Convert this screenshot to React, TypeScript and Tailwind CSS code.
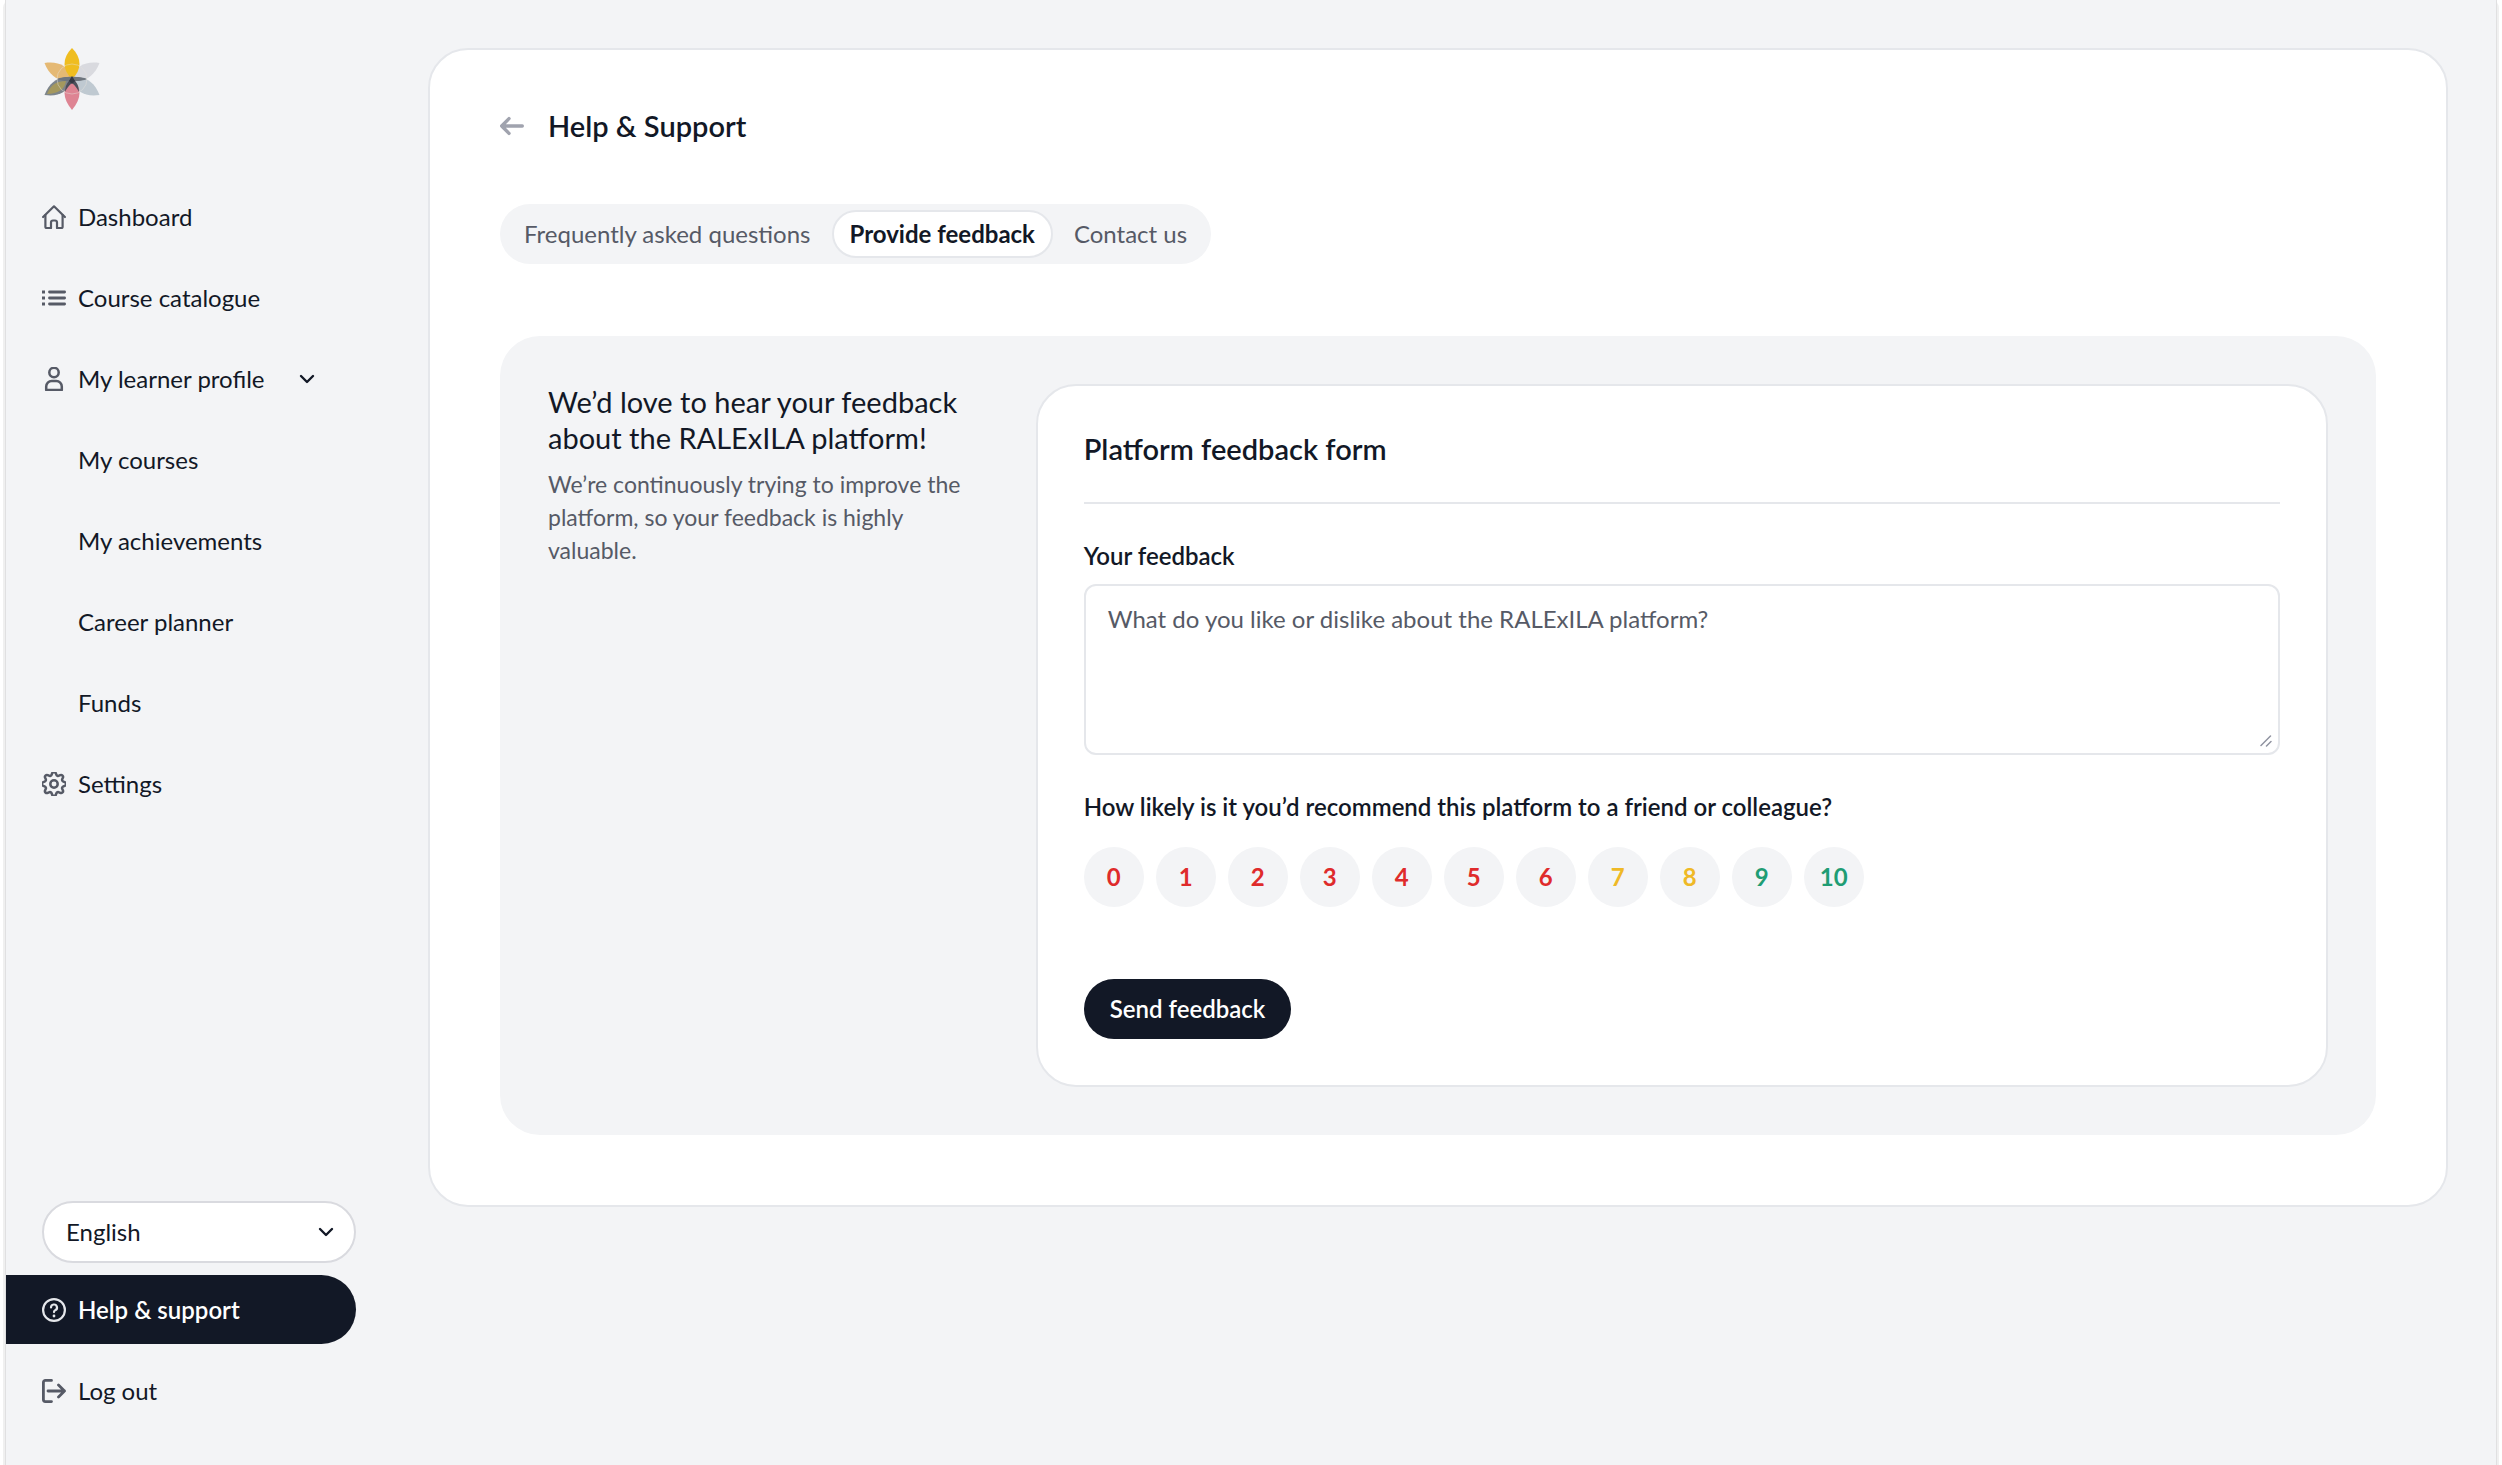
import React from 'react';

type IconProps = { className?: string };

const Logo: React.FC = () => (
  <svg width="56" height="62" viewBox="0 0 56 62" fill="none" aria-hidden="true">
    <path d="M0.500 15C13 13 25 17 28 31C16 35 6 29 0.500 15Z" fill="#E5B974" />
    <path d="M55.500 15C43 13 31 17 28 31C40 35 50 29 55.500 15Z" fill="#D9DADF" />
    <path d="M0.500 47C6 33 16 27 28 31C25 45 13 49 0.500 47Z" fill="#7D858B" />
    <path d="M55.500 47C50 33 40 27 28 31C31 45 43 49 55.500 47Z" fill="#BFC9D1" />
    <path d="M3 46C7 36 13 33 22 33C21 41 14 46 3 46Z" fill="#C5A73A" fillOpacity=".55" />
    <path d="M28 0C38 10 38 22 28 31C18 22 18 10 28 0Z" fill="#EFBD20" />
    <path d="M28 30C38 39 38 50 28 62C18 50 18 39 28 30Z" fill="#DE8493" />
    <path d="M13 31C18 28 38 28 43 31C38 34 18 34 13 31Z" fill="#6F757D" />
    <path d="M28 29C31 33 35 36 35 44C34 42 31 37 28 35C25 37 22 42 21 44C21 36 25 33 28 29Z" fill="#4B505B" />
    <path d="M28 28L31 33L28 36L25 33Z" fill="#343844" />
    <circle cx="28" cy="31" r="15" stroke="#E6E3DC" strokeOpacity=".45" />
  </svg>
);

const HomeIcon: React.FC<IconProps> = ({ className }) => (
  <svg className={className} viewBox="0 0 24 24" fill="none" stroke="currentColor" strokeWidth="2.200" strokeLinecap="round" strokeLinejoin="round">
    <path d="M1.100 12L12 1.300L22.900 12" />
    <path d="M3.400 10V22a1 1 0 0 0 1 1H9v-5.500a2 2 0 0 1 2-2h2a2 2 0 0 1 2 2V23h4.600a1 1 0 0 0 1-1V10" />
  </svg>
);

const ListIcon: React.FC<IconProps> = ({ className }) => (
  <svg className={className} viewBox="0 0 24 24" fill="none" stroke="currentColor" strokeWidth="2.800" strokeLinecap="round">
    <path d="M7.500 6H22.600M7.500 12H22.600M7.500 18H22.600" />
    <path d="M0 6H3M0 12H3M0 18H3" strokeLinecap="butt" />
  </svg>
);

const UserIcon: React.FC<IconProps> = ({ className }) => (
  <svg className={className} viewBox="0 0 24 24" fill="none" stroke="currentColor" strokeWidth="2.500" strokeLinejoin="round">
    <circle cx="12" cy="5.500" r="4.700" />
    <path d="M4.200 22.900V19.500a5.500 5.500 0 0 1 5.500-5.500h4.600a5.500 5.500 0 0 1 5.500 5.500V22.900Z" />
  </svg>
);

const GearIcon: React.FC<IconProps> = ({ className }) => (
  <svg className={className} viewBox="0 0 24 24" fill="none" stroke="currentColor" strokeWidth="2.500" strokeLinejoin="round">
    <circle cx="12" cy="12" r="3.700" />
    <path
      transform="rotate(22.5 12 12)"
      d="M10.546 2.438a1.957 1.957 0 0 0 2.908 0L14.400 1.400a1.959 1.959 0 0 1 3.410 1.413l-.071 1.400A1.958 1.958 0 0 0 19.790 6.270l1.400-.071A1.959 1.959 0 0 1 22.600 9.608l-1.041.94a1.960 1.960 0 0 0 0 2.909l1.041.94A1.959 1.959 0 0 1 21.192 17.800l-1.400-.071a1.958 1.958 0 0 0-2.057 2.056l.071 1.400A1.959 1.959 0 0 1 14.400 22.600l-.941-1.041a1.957 1.957 0 0 0-2.908 0L9.606 22.600A1.959 1.959 0 0 1 6.200 21.192l.072-1.400a1.958 1.958 0 0 0-2.057-2.056l-1.400.071A1.958 1.958 0 0 1 1.400 14.400l1.041-.94a1.960 1.960 0 0 0 0-2.909L1.400 9.608A1.958 1.958 0 0 1 2.808 6.200l1.400.071A1.958 1.958 0 0 0 6.264 4.213l-.072-1.400A1.959 1.959 0 0 1 9.606 1.400Z"
    />
  </svg>
);

const HelpIcon: React.FC<IconProps> = ({ className }) => (
  <svg className={className} viewBox="0 0 24 24" fill="none" stroke="currentColor" strokeWidth="2.200" strokeLinecap="round" strokeLinejoin="round">
    <circle cx="12" cy="12" r="10.900" />
    <path d="M9 9.500a3 3 0 1 1 4.200 2.750A2 2 0 0 0 12 14.100" />
    <circle cx="12" cy="18" r="1.400" fill="currentColor" stroke="none" />
  </svg>
);

const LogoutIcon: React.FC<IconProps> = ({ className }) => (
  <svg className={className} viewBox="0 0 24 24" fill="none" stroke="currentColor" strokeWidth="2.800" strokeLinecap="round" strokeLinejoin="round">
    <path d="M9.500 1.400H3.400a2 2 0 0 0-2 2V20.600a2 2 0 0 0 2 2H9.500" />
    <path d="M6 12H22.500M16.500 6L22.500 12L16.500 18" />
  </svg>
);

const ArrowLeftIcon: React.FC<IconProps> = ({ className }) => (
  <svg className={className} viewBox="0 0 24 24" fill="none" stroke="currentColor" strokeWidth="3.400" strokeLinecap="round" strokeLinejoin="round">
    <path d="M22.300 12H1.700M9 4.600L1.700 12L9 19.400" />
  </svg>
);

const ChevronIcon: React.FC<IconProps> = ({ className }) => (
  <svg className={className} viewBox="0 0 16 16" fill="none" stroke="currentColor" strokeWidth="2.400" strokeLinecap="round" strokeLinejoin="round">
    <path d="M2 5L8 11L14 5" />
  </svg>
);

const ResizeHandle: React.FC<IconProps> = ({ className }) => (
  <svg className={className} viewBox="0 0 12 12" fill="none" stroke="currentColor" strokeWidth="1.500" strokeLinecap="round">
    <path d="M1 10.500L10.500 1M6.500 11L11 6.500" />
  </svg>
);

const NavItem: React.FC<{ label: string; icon?: React.FC<IconProps>; active?: boolean; children?: React.ReactNode }> = ({ label, icon: Icon, active, children }) => (
  <a
    href="#"
    className={
      active
        ? 'flex h-[69px] items-center gap-3 rounded-r-full bg-[#121826] pl-9 font-semibold text-white'
        : 'flex h-[69px] items-center gap-3 pl-9 text-[#121826]'
    }
  >
    <span className={active ? 'h-6 w-6 text-gray-200' : 'h-6 w-6 text-[#565a66]'}>{Icon && <Icon className="h-6 w-6" />}</span>
    {label}
    {children}
  </a>
);

const scores = [
  { value: 0, color: 'text-[#df2b2b]' },
  { value: 1, color: 'text-[#df2b2b]' },
  { value: 2, color: 'text-[#df2b2b]' },
  { value: 3, color: 'text-[#df2b2b]' },
  { value: 4, color: 'text-[#df2b2b]' },
  { value: 5, color: 'text-[#df2b2b]' },
  { value: 6, color: 'text-[#df2b2b]' },
  { value: 7, color: 'text-[#efb926]' },
  { value: 8, color: 'text-[#efb926]' },
  { value: 9, color: 'text-[#1f9d74]' },
  { value: 10, color: 'text-[#1f9d74]' },
];

const Sidebar: React.FC = () => (
  <aside className="flex w-[350px] shrink-0 flex-col pt-12 pb-10">
    <a href="#" aria-label="Home" className="ml-[38px] block h-[62px]">
      <Logo />
    </a>
    <nav className="mt-18 flex flex-col gap-3">
      <NavItem label="Dashboard" icon={HomeIcon} />
      <NavItem label="Course catalogue" icon={ListIcon} />
      <NavItem label="My learner profile" icon={UserIcon}>
        <ChevronIcon className="ml-[22px] h-4 w-4" />
      </NavItem>
      <NavItem label="My courses" />
      <NavItem label="My achievements" />
      <NavItem label="Career planner" />
      <NavItem label="Funds" />
      <NavItem label="Settings" icon={GearIcon} />
    </nav>
    <div className="mt-auto flex flex-col gap-3">
      <div className="relative ml-9">
        <select aria-label="Language" className="h-[62px] w-full appearance-none rounded-full border-2 border-[#d9dadf] bg-white px-[22px] text-[#121826]">
          <option>English</option>
        </select>
        <ChevronIcon className="pointer-events-none absolute top-[23px] right-[22px] h-4 w-4 text-[#121826]" />
      </div>
      <NavItem label="Help & support" icon={HelpIcon} active />
      <NavItem label="Log out" icon={LogoutIcon} />
    </div>
  </aside>
);

const FeedbackForm: React.FC = () => (
  <form className="flex-1 rounded-[40px] border-2 border-gray-200 bg-white p-[46px]">
    <h2 className="border-b-2 border-gray-200 pb-9 text-[29px] leading-[34px] font-semibold">Platform feedback form</h2>
    <label htmlFor="feedback" className="mt-9 block leading-8 font-semibold">
      Your feedback
    </label>
    <div className="relative mt-3">
      <textarea
        id="feedback"
        placeholder="What do you like or dislike about the RALExILA platform?"
        className="block h-[171px] w-full resize-none rounded-xl border-2 border-gray-200 bg-white px-[22px] py-[15px] leading-9 placeholder:text-[#565a66]"
      />
      <ResizeHandle className="pointer-events-none absolute right-2 bottom-2 h-3 w-3 text-[#9093a0]" />
    </div>
    <fieldset className="mt-9">
      <legend className="leading-8 font-semibold">How likely is it you’d recommend this platform to a friend or colleague?</legend>
      <div className="mt-6 flex gap-3">
        {scores.map((score) => (
          <button key={score.value} type="button" className={`h-15 w-15 rounded-full bg-gray-100 font-bold ${score.color}`}>
            {score.value}
          </button>
        ))}
      </div>
    </fieldset>
    <button type="submit" className="mt-18 block h-15 rounded-full bg-[#121826] px-[26px] font-semibold text-white">
      Send feedback
    </button>
  </form>
);

const App: React.FC = () => {
  return (
    <div className="bg-white px-[3px] font-['Lato','Liberation_Sans',sans-serif] text-2xl text-[#121826]">
      <div className="rounded-t-lg bg-[#f0f0f0] px-[2px]">
        <div className="flex min-h-screen gap-18 border-x border-[#e0e0e1] bg-gray-100 pr-12">
          <Sidebar />
          <main className="flex-1 pt-12">
            <div className="rounded-[40px] border-2 border-gray-200 bg-white p-[70px]">
              <header className="-mt-3 flex items-center gap-6">
                <a href="#" aria-label="Back" className="text-[#a0a3ae]">
                  <ArrowLeftIcon className="h-6 w-6" />
                </a>
                <h1 className="text-[29px] leading-9 font-semibold">Help &amp; Support</h1>
              </header>
              <div role="tablist" className="mt-15 inline-flex h-15 gap-[3px] rounded-full bg-gray-100 p-[6px] text-[#565a66]">
                <button role="tab" type="button" className="rounded-full px-[18px]">Frequently asked questions</button>
                <button role="tab" type="button" aria-selected="true" className="rounded-full border-2 border-gray-200 bg-white px-4 font-bold text-[#121826]">Provide feedback</button>
                <button role="tab" type="button" className="rounded-full px-[18px]">Contact us</button>
              </div>
              <section className="mt-18 flex rounded-[40px] bg-gray-100 p-12">
                <div className="w-[27.4%] pr-14">
                  <p className="text-[29px] leading-9">We’d love to hear your feedback about the RALExILA platform!</p>
                  <p className="mt-3 text-[23px] leading-[33px] text-[#565a66]">We’re continuously trying to improve the platform, so your feedback is highly valuable.</p>
                </div>
                <FeedbackForm />
              </section>
            </div>
          </main>
        </div>
      </div>
    </div>
  );
};

export default App;
